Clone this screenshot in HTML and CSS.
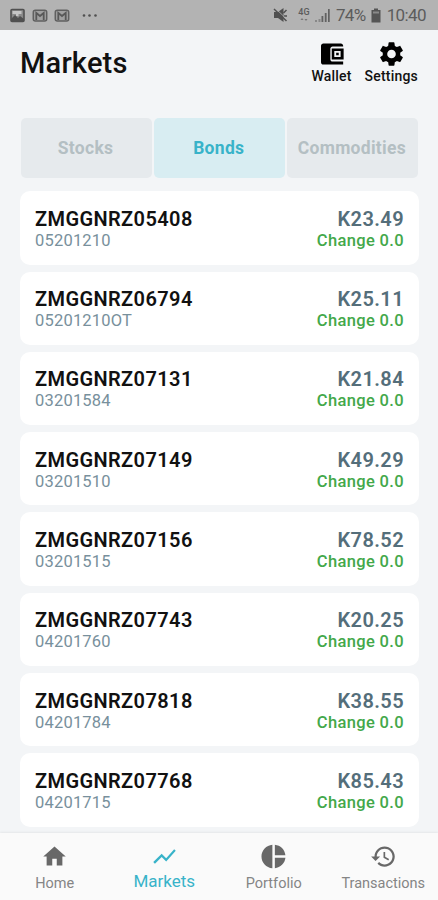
FILE: index.html
```html
<!DOCTYPE html>
<html lang="en">
<head>
<meta charset="utf-8">
<title>Markets</title>
<link rel="stylesheet" href="styles.css">
</head>

<body>

<div class="statusbar">
<div class="notifications">
<svg width="15" height="15" viewBox="0 0 15 15"><rect x="1" y="1.500" width="13" height="12" rx="1" fill="#8a8a8a" stroke="#505050" stroke-width="1.600"/><path d="M1 13V11l4-4 3 3 2-2 4 3v2z" fill="#505050"/><path d="M2.500 3h9v3h-3v2H6V6H2.500z" fill="#c4c4c4"/></svg>
<svg width="16" height="15" viewBox="0 0 16 15"><rect x="1.300" y="2.300" width="13.400" height="10.600" rx="2" fill="#a0a0a0" stroke="#606060" stroke-width="1.500"/><path d="M4.300 12V5l3.700 3 3.700-3v7" fill="none" stroke="#585858" stroke-width="1.800"/></svg>
<svg width="16" height="15" viewBox="0 0 16 15"><rect x="1.300" y="2.300" width="13.400" height="10.600" rx="2" fill="#a0a0a0" stroke="#606060" stroke-width="1.500"/><path d="M4.300 12V5l3.700 3 3.700-3v7" fill="none" stroke="#585858" stroke-width="1.800"/></svg>
<svg class="more" width="18" height="15" viewBox="0 0 18 15"><g fill="#505050"><circle cx="2" cy="7.500" r="1.300"/><circle cx="7.500" cy="7.500" r="1.300"/><circle cx="13.500" cy="7.500" r="1.300"/></g></svg>
</div>
<div class="system">
<svg class="mute" width="15" height="16" viewBox="0 0 15 16"><path d="M1 5h4L10.500 1v14L5 11H1z" fill="#505050"/><path d="M1 2l12.500 12M10.500 6l3-3M11 9h3" fill="none" stroke="#505050" stroke-width="1.500"/><path d="M2.500 1.500l9 8.500" stroke="#b3b3b3" stroke-width="0.800"/></svg>
<div class="network">4G<svg width="8" height="5" viewBox="0 0 8 5"><path d="M0.500 3l1.500-2 1.500 2zM4.500 2L6 4l1.500-2z" fill="#777"/></svg></div>
<svg class="signal" width="15" height="15" viewBox="0 0 15 15"><path d="M0 12h2v2H0zM3.500 11h2v3h-2z" fill="#888"/><path d="M6.500 8h1.800v6H6.500zM9.800 5h1.800v9H9.800zM13 1h1.700v13H13z" fill="#626262"/></svg>
<span class="percent">74%</span>
<svg class="battery" width="10" height="15" viewBox="0 0 10 15"><path d="M3 0.500h4v1.500H9.500v12.500H0.500V2H3z" fill="#555"/><path d="M2 3.500h6v2H2z" fill="#8a8a8a"/></svg>
<span class="clock">10:40</span>
</div>
</div>

<div class="header">
<h1>Markets</h1>
<div class="actions">
<div class="action">
<svg width="29" height="28" viewBox="0 0 24 24"><path fill-rule="evenodd" d="M22 18.500V21H5c-1.110 0-2-.9-2-2V5c0-1.100.89-2 2-2h15c1.100 0 2 .9 2 2v.5H13c-1.110 0-2 .9-2 2v9c0 1.100.89 2 2 2h9zM12.200 7.200h10.200v9.600H12.200zM14.400 9.400v5.200h5.400V9.400zM16 11h2.200v2H16z"/></svg>
<span>Wallet</span>
</div>
<div class="action">
<svg width="29" height="28" viewBox="0 0 24 24"><path d="M19.430 12.980c.04-.32.07-.64.07-.98s-.03-.66-.07-.98l2.110-1.650c.19-.15.24-.42.12-.64l-2-3.460c-.12-.22-.39-.3-.61-.22l-2.490 1c-.52-.4-1.080-.73-1.690-.98l-.38-2.650C14.460 2.180 14.250 2 14 2h-4c-.25 0-.46.18-.49.42l-.38 2.650c-.61.25-1.170.59-1.690.98l-2.490-1c-.23-.09-.49 0-.61.22l-2 3.460c-.13.22-.07.49.12.64l2.110 1.650c-.04.32-.07.65-.07.98s.03.66.07.98l-2.110 1.650c-.19.15-.24.42-.12.64l2 3.460c.12.22.39.3.61.22l2.490-1c.52.4 1.080.73 1.690.98l.38 2.650c.03.24.24.42.49.42h4c.25 0 .46-.18.49-.42l.38-2.650c.61-.25 1.170-.59 1.690-.98l2.490 1c.23.09.49 0 .61-.22l2-3.460c.12-.22.07-.49-.12-.64l-2.110-1.650zM12 15.700a3.700 3.700 0 1 1 0-7.400 3.700 3.700 0 0 1 0 7.400z"/></svg>
<span>Settings</span>
</div>
</div>
</div>

<div class="tabs">
<div class="tab">Stocks</div>
<div class="tab active">Bonds</div>
<div class="tab">Commodities</div>
</div>

<div class="list">
<div class="card">
<div><div class="name">ZMGGNRZ05408</div><div class="code">05201210</div></div>
<div class="right"><div class="price">K23.49</div><div class="change">Change 0.0</div></div>
</div>
<div class="card">
<div><div class="name">ZMGGNRZ06794</div><div class="code">05201210OT</div></div>
<div class="right"><div class="price">K25.11</div><div class="change">Change 0.0</div></div>
</div>
<div class="card">
<div><div class="name">ZMGGNRZ07131</div><div class="code">03201584</div></div>
<div class="right"><div class="price">K21.84</div><div class="change">Change 0.0</div></div>
</div>
<div class="card">
<div><div class="name">ZMGGNRZ07149</div><div class="code">03201510</div></div>
<div class="right"><div class="price">K49.29</div><div class="change">Change 0.0</div></div>
</div>
<div class="card">
<div><div class="name">ZMGGNRZ07156</div><div class="code">03201515</div></div>
<div class="right"><div class="price">K78.52</div><div class="change">Change 0.0</div></div>
</div>
<div class="card">
<div><div class="name">ZMGGNRZ07743</div><div class="code">04201760</div></div>
<div class="right"><div class="price">K20.25</div><div class="change">Change 0.0</div></div>
</div>
<div class="card">
<div><div class="name">ZMGGNRZ07818</div><div class="code">04201784</div></div>
<div class="right"><div class="price">K38.55</div><div class="change">Change 0.0</div></div>
</div>
<div class="card">
<div><div class="name">ZMGGNRZ07768</div><div class="code">04201715</div></div>
<div class="right"><div class="price">K85.43</div><div class="change">Change 0.0</div></div>
</div>
</div>

<div class="navbar">
<div class="navitem">
<svg width="27" height="27" viewBox="0 0 24 24"><path d="M10 20v-6h4v6h5v-8h3L12 3 2 12h3v8z"/></svg>
<span>Home</span>
</div>
<div class="navitem selected">
<svg width="27" height="27" viewBox="0 0 24 24"><path d="M3.500 18.490l6-6.010 4 4L22 6.920l-1.410-1.410-7.090 7.970-4-4L2 16.990z"/></svg>
<span>Markets</span>
</div>
<div class="navitem">
<svg width="27" height="27" viewBox="0 0 24 24"><path d="M11 1.500v21C5.600 22 1.300 17.500 1.300 12S5.600 2 11 1.500zm2.200 0v9.300h9.400c-.5-5-4.400-8.800-9.400-9.300zm0 11.700v9.300c5-.5 8.900-4.400 9.400-9.300z"/></svg>
<span>Portfolio</span>
</div>
<div class="navitem">
<svg width="27" height="27" viewBox="0 0 24 24"><path d="M13 3c-4.970 0-9 4.030-9 9H1l3.890 3.890.07.14L9 12H6c0-3.870 3.130-7 7-7s7 3.130 7 7-3.130 7-7 7c-1.930 0-3.680-.79-4.940-2.060l-1.420 1.420C8.270 19.990 10.510 21 13 21c4.970 0 9-4.030 9-9s-4.030-9-9-9zm-1 5v5l4.280 2.540.72-1.210-3.500-2.080V8z"/></svg>
<span>Transactions</span>
</div>
</div>

</body>
</html>
```
FILE: styles.css
```css
*{
box-sizing:border-box;
}

body{
margin:0;
height:900px;
display:flex;
flex-direction:column;
overflow:hidden;
background:#f3f5f7;
font-family:Roboto,sans-serif;
color:#111;
}

svg{
display:block;
flex-shrink:0;
}

.statusbar{
height:30px;
flex-shrink:0;
display:flex;
justify-content:space-between;
align-items:center;
padding:0 12px 0 10px;
background:#b3b3b3;
color:#5c5c5c;
}

.notifications{
display:flex;
align-items:center;
gap:6.500px;
}

.more{
margin-left:5px;
}

.system{
display:flex;
align-items:center;
font-size:17px;
line-height:30px;
letter-spacing:-0.600px;
}

.network{
width:14px;
margin:0 4px 0 9px;
display:flex;
flex-direction:column;
align-items:center;
font-size:9px;
font-weight:500;
line-height:9px;
letter-spacing:0;
}

.percent{
margin:0 5px 0 6px;
}

.clock{
margin-left:6px;
}

.header{
height:87.500px;
flex-shrink:0;
display:flex;
justify-content:space-between;
padding:10px 20px 0;
}

h1{
margin:5px 0 0;
font-size:29px;
line-height:36px;
font-weight:500;
letter-spacing:0.200px;
}

.actions{
display:flex;
gap:13px;
}

.action{
display:flex;
flex-direction:column;
align-items:center;
font-size:14px;
line-height:17px;
font-weight:500;
letter-spacing:0.200px;
}

.tabs{
height:60.500px;
flex-shrink:0;
display:grid;
grid-template-columns:1fr 1fr 1fr;
gap:2px;
margin:0 20px 0 20.500px;
}

.tab{
display:flex;
align-items:center;
justify-content:center;
padding-right:1px;
border-radius:5px;
background:#e6eaed;
color:#b4bfc3;
font-size:17.500px;
font-weight:700;
letter-spacing:0.300px;
}

.tab.active{
background:#d8edf2;
color:#38b3c9;
}

.list{
flex:1;
min-height:0;
overflow:hidden;
padding:13.300px 19.500px 0 20px;
}

.card{
height:73.300px;
margin-bottom:7px;
padding:15.500px 14.500px 0 15px;
display:flex;
justify-content:space-between;
border-radius:10px;
background:#fff;
}

.name,
.price{
font-size:20px;
line-height:24px;
font-weight:600;
letter-spacing:0.400px;
}

.code{
color:#78909c;
font-size:16.500px;
line-height:20px;
letter-spacing:0.200px;
}

.right{
text-align:right;
}

.price{
color:#546e7a;
}

.change{
color:#43a84a;
font-size:16.500px;
line-height:20px;
font-weight:500;
letter-spacing:0.350px;
}

.navbar{
height:67.500px;
flex-shrink:0;
display:grid;
grid-template-columns:repeat(4,1fr);
background:#fafafa;
box-shadow:0 -1px 2px rgba(0,0,0,0.06);
color:#858585;
}

.navitem{
display:flex;
flex-direction:column;
align-items:center;
padding-top:10.500px;
font-size:14.500px;
line-height:18px;
}

.navitem svg{
fill:#686868;
}

.navitem span{
margin-top:5px;
}

.navitem.selected{
color:#38b3c9;
font-size:17px;
}

.navitem.selected svg{
fill:#38b3c9;
}

.navitem.selected span{
margin-top:2px;
}
```
